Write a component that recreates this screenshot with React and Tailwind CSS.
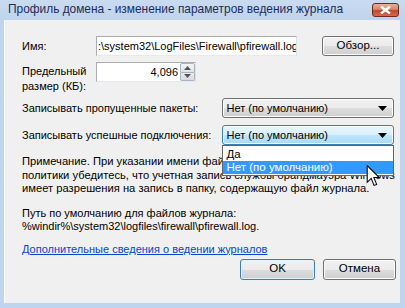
import React from 'react';

const font = { fontFamily: '"Liberation Sans", Arial, sans-serif' };

const Win7Button = ({ children, primary, className = '' }) => (
  <div
    className={`flex items-center justify-center rounded-[3px] border ${
      primary ? 'border-[#3c7fb1] shadow-[inset_0_0_0_1px_#dff2fc]' : 'border-[#707070] shadow-[inset_0_0_0_1px_#fcfcfc]'
    } bg-[linear-gradient(to_bottom,#f2f2f2_0%,#ebebeb_50%,#dddddd_51%,#cfcfcf_100%)] text-[11.5px] text-black ${className}`}
  >
    {children}
  </div>
);

const Arrow = () => (
  <svg width="9" height="5" viewBox="0 0 9 5" className="shrink-0">
    <path d="M0 0 H9 L4.5 5 Z" fill="#000" />
  </svg>
);

const Cursor = () => (
  <svg width="15" height="22" viewBox="0 0 13 21" className="absolute left-[144px] top-[40px]">
    <path
      d="M0.5 0.5 V16.5 L4.3 12.8 L7 19.5 L9.5 18.5 L6.8 12 H12 Z"
      fill="#fff"
      stroke="#000"
      strokeWidth="1"
      strokeLinejoin="miter"
    />
  </svg>
);

export default function App() {
  return (
    <div className="w-[405px] h-[308px] bg-[#bfd4ee] flex flex-col overflow-hidden" style={font}>
      {/* Title bar */}
      <div className="h-[20px] flex items-center pl-[8px] pr-[6px] bg-[linear-gradient(to_bottom,#c9dbf0,#bed3ed)]">
        <span className="text-[11.9px] text-[#1c2c5c] whitespace-nowrap">
          Профиль домена - изменение параметров ведения журнала
        </span>
        <div className="ml-auto w-[27px] h-[14px] rounded-[3px] border border-[#6b2a1e] bg-[linear-gradient(to_bottom,#e9b09a_0%,#d9826a_45%,#c0482e_55%,#d56a4e_100%)] flex items-center justify-center">
          <svg width="11" height="8" viewBox="0 0 11 8">
            <path d="M1 0.5 L10 7.5 M10 0.5 L1 7.5" stroke="#fff" strokeWidth="2.4" />
          </svg>
        </div>
      </div>

      {/* Client area */}
      <div className="flex-1 ml-[4px] mr-[5px] mb-[5px] bg-[#f0f0f0] border-l border-[#fafdff] pl-[17px] pr-[6px] text-[11px] text-black">
        {/* Name */}
        <div className="mt-[16px] h-[20px] flex items-center">
          <span className="w-[74px]">Имя:</span>
          <div className="w-[201px] h-[20px] bg-white border border-[#abadb3] border-b-[#e3e9ef] border-r-[#dbdfe6] flex items-center overflow-hidden whitespace-nowrap pl-[1px]">
            :\system32\LogFiles\Firewall\pfirewall.log
          </div>
          <Win7Button className="ml-auto w-[72px] h-[20px]">Обзор...</Win7Button>
        </div>

        {/* Size */}
        <div className="mt-[6px] flex items-start">
          <div className="w-[74px] leading-[15px] pt-[2px]">
            Предельный
            <br />
            размер (КБ):
          </div>
          <div className="w-[100px] h-[20px] bg-white border border-[#abadb3] border-b-[#e3e9ef] border-r-[#dbdfe6] flex items-center">
            <span className="flex-1 text-right pr-[2px]">4,096</span>
            <div className="w-[15px] h-[18px] flex flex-col">
              <div className="flex-1 border border-[#a9b4c2] rounded-t-[2px] bg-[linear-gradient(to_bottom,#f5f5f5,#e2e2e2)] flex items-center justify-center">
                <svg width="7" height="4" viewBox="0 0 7 4">
                  <path d="M0 4 L3.5 0 L7 4 Z" fill="#4d5566" />
                </svg>
              </div>
              <div className="flex-1 border border-t-0 border-[#a9b4c2] rounded-b-[2px] bg-[linear-gradient(to_bottom,#ececec,#dadada)] flex items-center justify-center">
                <svg width="7" height="4" viewBox="0 0 7 4">
                  <path d="M0 0 H7 L3.5 4 Z" fill="#4d5566" />
                </svg>
              </div>
            </div>
          </div>
        </div>

        {/* Dropped packets */}
        <div className="mt-[4px] h-[20px] flex items-center">
          <span className="w-[201px]">Записывать пропущенные пакеты:</span>
          <div className="ml-auto w-[172px] h-[20px] rounded-[3px] border border-[#707070] bg-[linear-gradient(to_bottom,#f2f2f2_0%,#ebebeb_50%,#dddddd_51%,#cfcfcf_100%)] shadow-[inset_0_0_0_1px_#fcfcfc] flex items-center pl-[3px] pr-[6px]">
            <span className="flex-1">Нет (по умолчанию)</span>
            <Arrow />
          </div>
        </div>

        {/* Successful connections */}
        <div className="mt-[7px] h-[20px] flex items-center">
          <span className="w-[201px] whitespace-nowrap">Записывать успешные подключения:</span>
          <div className="relative ml-auto w-[172px] h-[20px]">
            <div className="h-full rounded-[3px] border border-[#3c7fb1] bg-[linear-gradient(to_bottom,#eaf6fd_0%,#d9f0fc_50%,#bee6fd_51%,#a7d9f5_100%)] shadow-[inset_0_0_0_1px_#f4fbff] flex items-center pl-[3px] pr-[6px]">
              <span className="flex-1">Нет (по умолчанию)</span>
              <Arrow />
            </div>
            {/* Dropdown list */}
            <div className="absolute left-0 top-[20px] w-[172px] bg-white border border-[#646464] z-10 pt-[2px] pb-[1px] text-[11.5px]">
              <div className="h-[13px] leading-[13px] px-[3px]">Да</div>
              <div className="h-[13px] leading-[13px] px-[3px] bg-[#3399ff] text-white">Нет (по умолчанию)</div>
            </div>
            <div className="absolute inset-0 z-20 pointer-events-none">
              <Cursor />
            </div>
          </div>
        </div>

        {/* Note */}
        <div className="mt-[10px] leading-[13.5px] whitespace-nowrap text-[11.2px]">
          Примечание. При указании имени файла журнала для профиля
          <br />
          политики убедитесь, что учетная запись службы брандмауэра Windows
          <br />
          имеет разрешения на запись в папку, содержащую файл журнала.
        </div>

        <div className="mt-[11px] leading-[13.5px] whitespace-nowrap">
          Путь по умолчанию для файлов журнала:
          <br />
          %windir%\system32\logfiles\firewall\pfirewall.log.
        </div>

        <div className="mt-[8px] leading-[14px] text-[#0645c8] underline">
          Дополнительные сведения о ведении журналов
        </div>

        <div className="mt-[3px] flex justify-end gap-[8px] mr-[-2px]">
          <Win7Button primary className="w-[75px] h-[21px]">
            OK
          </Win7Button>
          <Win7Button className="w-[73px] h-[21px]">Отмена</Win7Button>
        </div>
      </div>
    </div>
  );
}
